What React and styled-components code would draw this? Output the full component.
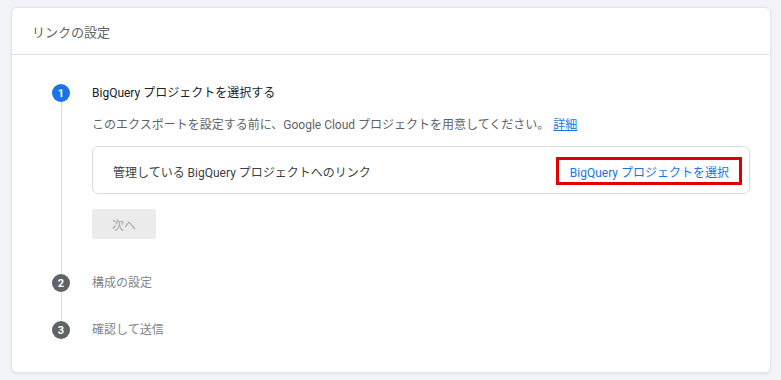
import React from "react";
import styled, { createGlobalStyle } from "styled-components";

const GlobalStyle = createGlobalStyle`
  html, body {
    margin: 0;
    padding: 0;
    background: #f1f3f4;
  }
  body {
    font-family: Roboto, "Noto Sans CJK JP", "Noto Sans", sans-serif;
    -webkit-font-smoothing: antialiased;
  }
`;

const Page = styled.div`
  padding: 7px 10px 7px 11px;
`;

const Card = styled.section`
  height: 366px;
  box-sizing: border-box;
  background: #fff;
  border: 1px solid #e3e5e8;
  border-radius: 6px;
  box-shadow: 0 1px 2px rgba(60, 64, 67, 0.1);
  display: flex;
  flex-direction: column;
`;

const CardHeader = styled.header`
  height: 46px;
  display: flex;
  align-items: center;
  padding-left: 20px;
  border-bottom: 1px solid #e0e0e0;
  font-size: 13px;
  color: #5f6368;
`;

const Steps = styled.div`
  padding: 29px 20px 0 40px;
`;

const Step = styled.div`
  display: flex;
`;

const Rail = styled.div`
  width: 18px;
  display: flex;
  flex-direction: column;
  align-items: center;
  flex-shrink: 0;
`;

const Circle = styled.div`
  width: 18px;
  height: 18px;
  border-radius: 50%;
  background: ${(p) => (p.active ? "#1a73e8" : "#5f6368")};
  color: #fff;
  font-size: 11px;
  font-weight: 700;
  display: flex;
  align-items: center;
  justify-content: center;
  flex-shrink: 0;
`;

const Line = styled.div`
  flex: 1;
  width: 1px;
  background: #dadce0;
  margin-left: 1px;
`;

const StepBody = styled.div`
  flex: 1;
  margin-left: 22px;
  padding-bottom: ${(p) => p.pad}px;
`;

const StepTitle = styled.div`
  height: 18px;
  line-height: 18px;
  font-size: 12px;
  color: ${(p) => (p.active ? "#202124" : "#80868b")};
`;

const Description = styled.p`
  margin: 15px 0 0;
  font-size: 12px;
  line-height: 16px;
  color: #5f6368;
`;

const Detail = styled.a`
  color: #1a73e8;
  text-decoration: underline;
  margin-left: 4px;
`;

const LinkBox = styled.div`
  margin-top: 13px;
  height: 48px;
  box-sizing: border-box;
  border: 1px solid #dadce0;
  border-radius: 6px;
  display: flex;
  align-items: center;
  justify-content: space-between;
  padding: 2px 7px 0 20px;
  font-size: 12px;
  color: #3c4043;
`;

const SelectButton = styled.button`
  height: 28px;
  box-sizing: border-box;
  border: 3px solid #e00000;
  background: #fff;
  padding: 0 10px 0 11px;
  font-family: inherit;
  font-size: 12px;
  font-weight: 400;
  color: #1a73e8;
  cursor: pointer;
`;

const NextButton = styled.button`
  margin-top: 15px;
  width: 64px;
  height: 30px;
  border: none;
  border-radius: 3px;
  background: #ebebeb;
  color: #a8a8a8;
  font-family: inherit;
  font-size: 12px;
  padding: 0;
`;

const steps = [
  { n: 1, title: "BigQuery プロジェクトを選択する", active: true },
  { n: 2, title: "構成の設定" },
  { n: 3, title: "確認して送信" },
];

export default function App() {
  return (
    <Page>
      <GlobalStyle />
      <Card>
        <CardHeader>リンクの設定</CardHeader>
        <Steps>
          {steps.map((s, i) => (
            <Step key={s.n}>
              <Rail>
                <Circle active={s.active}>{s.n}</Circle>
                {i < steps.length - 1 && <Line />}
              </Rail>
              <StepBody pad={i === 0 ? 35 : i === 1 ? 29 : 0}>
                <StepTitle active={s.active}>{s.title}</StepTitle>
                {s.active && (
                  <>
                    <Description>
                      このエクスポートを設定する前に、Google Cloud
                      プロジェクトを用意してください。
                      <Detail>詳細</Detail>
                    </Description>
                    <LinkBox>
                      <span>管理している BigQuery プロジェクトへのリンク</span>
                      <SelectButton>BigQuery プロジェクトを選択</SelectButton>
                    </LinkBox>
                    <NextButton disabled>次へ</NextButton>
                  </>
                )}
              </StepBody>
            </Step>
          ))}
        </Steps>
      </Card>
    </Page>
  );
}
